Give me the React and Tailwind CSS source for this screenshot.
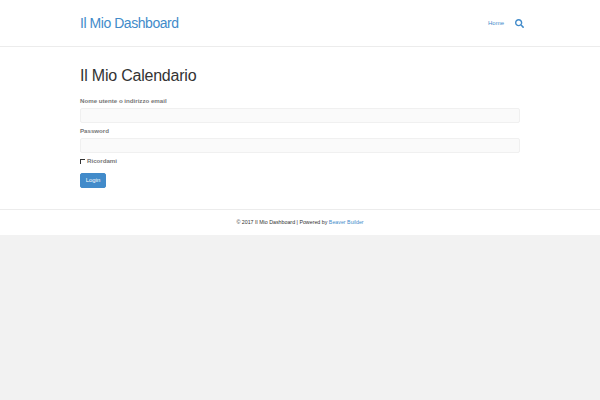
import React from "react";
import { FaSearch } from "react-icons/fa";

export default function App() {
  return (
    <div className="min-h-[400px] bg-[#f2f2f2] font-['Liberation_Sans',Arial,sans-serif] text-[#333] antialiased">
      <div className="bg-white">
        <header className="flex h-[47px] items-center justify-between border-b border-[#ececec] pl-20 pr-[76px]">
          <a className="text-[14px] leading-[20px] tracking-[-0.45px] text-[#428bca]">Il Mio Dashboard</a>
          <nav className="flex items-center gap-[11px]">
            <a className="text-[6px] text-[#428bca]">Home</a>
            <FaSearch className="h-[9px] w-[9px] text-[#428bca]" />
          </nav>
        </header>

        <main className="h-[162px] px-20 pt-[18px]">
          <h1 className="text-[16px] leading-[22px] tracking-[-0.22px] text-[#333]">Il Mio Calendario</h1>
          <form className="mt-[9px] w-[440px]">
            <label className="block text-[6.15px] leading-[10px] font-bold text-[#777]">Nome utente o indirizzo email</label>
            <input className="mt-[2px] block h-[15px] w-full rounded-[2px] border border-[#f0f0f0] bg-[#fafafa]" />
            <label className="mt-[3px] block text-[6.15px] leading-[10px] font-bold text-[#777]">Password</label>
            <input className="mt-[2px] block h-[15px] w-full rounded-[2px] border border-[#f0f0f0] bg-[#fafafa]" />
            <label className="mt-[3px] flex items-center gap-[2px] text-[6.15px] leading-[10px] font-bold text-[#777]">
              <span className="h-[5px] w-[5px] border-t border-l border-[#333] bg-white" />
              Ricordami
            </label>
            <button type="button" className="mt-[7px] block h-[15px] w-[26px] rounded-[2px] border border-[#428bca] bg-[#428bca] text-[6px] text-white">
              Login
            </button>
          </form>
        </main>

        <footer className="flex h-[26px] items-center justify-center border-t border-[#ececec] text-[5.3px] text-[#333]">
          <span>
            © 2017 Il Mio Dashboard | Powered by <a className="text-[#428bca]">Beaver Builder</a>
          </span>
        </footer>
      </div>
    </div>
  );
}
